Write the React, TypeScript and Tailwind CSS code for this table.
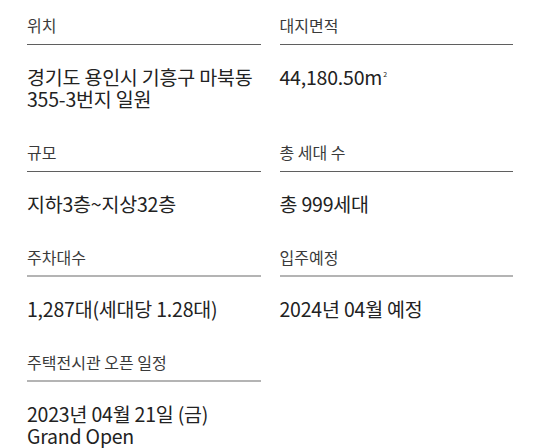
import type { ReactNode } from "react";

const sqm: ReactNode = (
  <>
    44,180.50m
    <span className="ml-[1px] inline-block align-[8px] text-[7px] leading-none">2</span>
  </>
);

const ITEMS: { label: string; value: ReactNode[]; line: "dark" | "light" }[] = [
  { label: "위치", value: ["경기도 용인시 기흥구 마북동", "355-3번지 일원"], line: "dark" },
  { label: "대지면적", value: [sqm], line: "dark" },
  { label: "규모", value: ["지하3층~지상32층"], line: "dark" },
  { label: "총 세대 수", value: ["총 999세대"], line: "dark" },
  { label: "주차대수", value: ["1,287대(세대당 1.28대)"], line: "light" },
  { label: "입주예정", value: ["2024년 04월 예정"], line: "light" },
  { label: "주택전시관 오픈 일정", value: ["2023년 04월 21일 (금)", "Grand Open"], line: "light" },
];

export default function App() {
  return (
    <div
      className="h-[448px] w-[540px] overflow-hidden bg-white px-[27px] pt-[14px]"
      style={{ fontFamily: '"Noto Sans CJK KR", "Noto Sans", sans-serif' }}
    >
      <div className="grid grid-cols-2 gap-x-[19px] gap-y-[31px]">
        {ITEMS.map((item) => (
          <div key={item.label}>
            <div
              className={
                item.line === "dark"
                  ? "border-b border-[#5f5f5f] pb-[8px] text-[16px] leading-[22px] text-[#3a3a3a]"
                  : "border-b-2 border-[#b4b4b4] pb-[7px] text-[16px] leading-[22px] text-[#3a3a3a]"
              }
            >
              {item.label}
            </div>
            <div className="mt-[21px] text-[19.5px] leading-[22px] tracking-[-0.2px] text-[#222]">
              {item.value.map((v, i) => (
                <div key={i}>{v}</div>
              ))}
            </div>
          </div>
        ))}
      </div>
    </div>
  );
}
